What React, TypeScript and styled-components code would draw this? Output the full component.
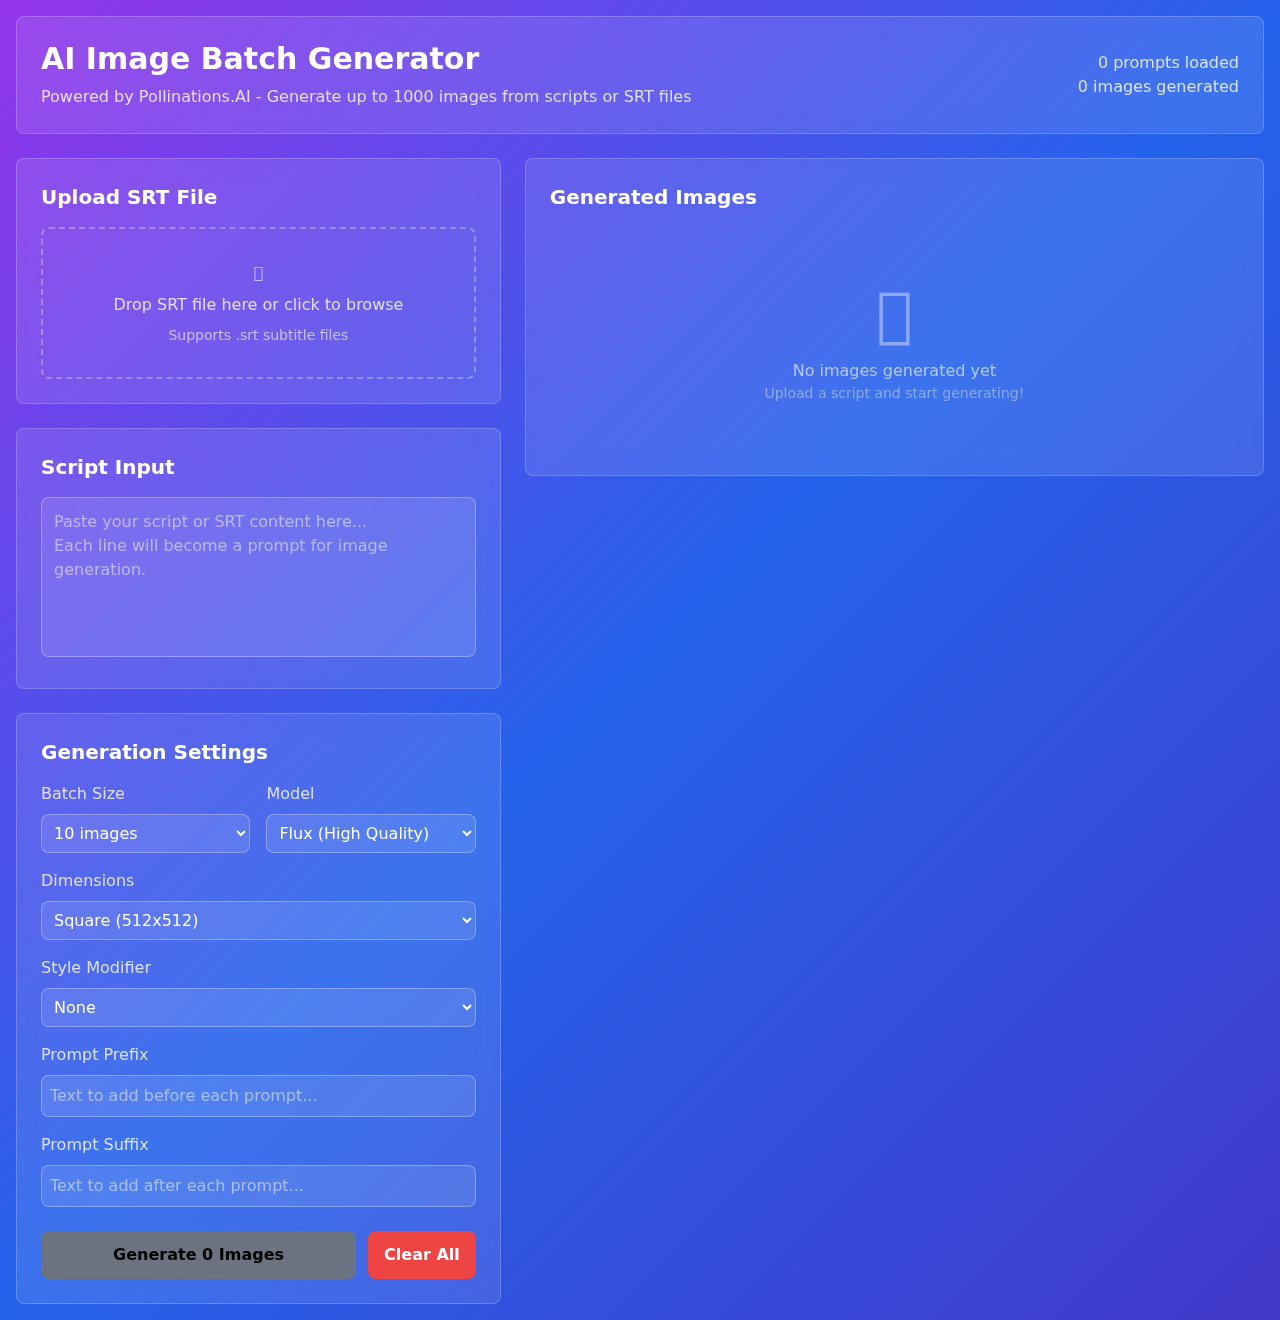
import { FC } from 'react';
import styled, { createGlobalStyle } from 'styled-components';

const GlobalStyle = createGlobalStyle`
  * {
    box-sizing: border-box;
  }

  body {
    margin: 0;
    font-family: 'DejaVu Sans', sans-serif;
    font-size: 16px;
    line-height: 24px;
    color: #fff;
  }
`;

const App: FC = () => (
  <Page>
    <GlobalStyle />
    <Header>
      <div>
        <Title>AI Image Batch Generator</Title>
        <Subtitle>Powered by Pollinations.AI - Generate up to 1000 images from scripts or SRT files</Subtitle>
      </div>
      <Stats>
        <div>0 prompts loaded</div>
        <div>0 images generated</div>
      </Stats>
    </Header>

    <Columns>
      <LeftColumn>
        <Panel>
          <PanelTitle>Upload SRT File</PanelTitle>
          <DropZone>
            <DropIcon>{'\uE000'}</DropIcon>
            <DropText>Drop SRT file here or click to browse</DropText>
            <DropHint>Supports .srt subtitle files</DropHint>
          </DropZone>
        </Panel>

        <Panel>
          <PanelTitle>Script Input</PanelTitle>
          <ScriptArea placeholder={'Paste your script or SRT content here...\nEach line will become a prompt for image generation.'} />
        </Panel>

        <Panel>
          <PanelTitle>Generation Settings</PanelTitle>
          <Fields>
            <FieldRow>
              <Field>
                <Label>Batch Size</Label>
                <Select defaultValue="10">
                  <option value="10">10 images</option>
                  <option value="50">50 images</option>
                </Select>
              </Field>
              <Field>
                <Label>Model</Label>
                <Select defaultValue="flux">
                  <option value="flux">Flux (High Quality)</option>
                  <option value="turbo">Turbo (Fast)</option>
                </Select>
              </Field>
            </FieldRow>
            <Field>
              <Label>Dimensions</Label>
              <Select defaultValue="square">
                <option value="square">Square (512x512)</option>
                <option value="wide">Wide (768x512)</option>
              </Select>
            </Field>
            <Field>
              <Label>Style Modifier</Label>
              <Select defaultValue="none">
                <option value="none">None</option>
                <option value="photo">Photorealistic</option>
              </Select>
            </Field>
            <Field>
              <Label>Prompt Prefix</Label>
              <TextInput placeholder="Text to add before each prompt..." />
            </Field>
            <Field>
              <Label>Prompt Suffix</Label>
              <TextInput placeholder="Text to add after each prompt..." />
            </Field>
          </Fields>
          <Actions>
            <GenerateButton>Generate 0 Images</GenerateButton>
            <ClearButton>Clear All</ClearButton>
          </Actions>
        </Panel>
      </LeftColumn>

      <RightColumn>
        <Panel>
          <PanelTitle>Generated Images</PanelTitle>
          <EmptyState>
            <EmptyIcon>{'\uE000'}</EmptyIcon>
            <EmptyText>No images generated yet</EmptyText>
            <EmptyHint>Upload a script and start generating!</EmptyHint>
          </EmptyState>
        </Panel>
      </RightColumn>
    </Columns>
  </Page>
);

export default App;

const Page = styled.div`
  min-height: 1320px;
  padding: 16px;
  background: linear-gradient(135deg, #9333ea 0%, #2563eb 50%, #4338ca 100%);
`;

const Panel = styled.section`
  padding: 24px;
  background-color: rgba(255, 255, 255, 0.1);
  border: 1px solid rgba(255, 255, 255, 0.2);
  border-radius: 8px;
  backdrop-filter: blur(10px);
`;

const Header = styled(Panel).attrs({ as: 'header' })`
  display: flex;
  justify-content: space-between;
  align-items: center;
  margin-bottom: 24px;
`;

const Title = styled.h1`
  margin: 0 0 8px;
  font-size: 30px;
  line-height: 36px;
  font-weight: 700;
`;

const Subtitle = styled.p`
  margin: 0;
  color: rgba(255, 255, 255, 0.8);
`;

const Stats = styled.div`
  text-align: right;
  color: rgba(255, 255, 255, 0.8);
`;

const Columns = styled.div`
  display: grid;
  grid-template-columns: repeat(5, 1fr);
  gap: 24px;
  align-items: start;
`;

const LeftColumn = styled.div`
  grid-column: span 2;
  display: flex;
  flex-direction: column;
  gap: 24px;
`;

const RightColumn = styled.div`
  grid-column: span 3;
`;

const PanelTitle = styled.h2`
  margin: 0 0 16px;
  font-size: 20px;
  line-height: 28px;
  font-weight: 600;
`;

const DropZone = styled.div`
  padding: 32px;
  border: 2px dashed rgba(255, 255, 255, 0.3);
  border-radius: 8px;
  text-align: center;
`;

const DropIcon = styled.div`
  margin-bottom: 8px;
  color: rgba(255, 255, 255, 0.6);
`;

const DropText = styled.p`
  margin: 0 0 8px;
  color: rgba(255, 255, 255, 0.8);
`;

const DropHint = styled.p`
  margin: 0;
  font-size: 14px;
  line-height: 20px;
  color: rgba(255, 255, 255, 0.6);
`;

const ScriptArea = styled.textarea`
  width: 100%;
  height: 160px;
  padding: 12px;
  font-family: inherit;
  font-size: 16px;
  line-height: 24px;
  color: #fff;
  background-color: rgba(255, 255, 255, 0.1);
  border: 1px solid rgba(255, 255, 255, 0.3);
  border-radius: 8px;
  resize: none;
  outline: none;

  &::placeholder {
    color: rgba(255, 255, 255, 0.5);
  }
`;

const Fields = styled.div`
  display: flex;
  flex-direction: column;
  gap: 16px;
`;

const FieldRow = styled.div`
  display: grid;
  grid-template-columns: 1fr 1fr;
  gap: 16px;
`;

const Field = styled.div`
  min-width: 0;
`;

const Label = styled.label`
  display: block;
  margin-bottom: 8px;
  color: rgba(255, 255, 255, 0.8);
`;

const Select = styled.select`
  display: block;
  width: 100%;
  height: 39px;
  padding: 8px;
  font-family: inherit;
  font-size: 16px;
  color: #fff;
  background-color: rgba(255, 255, 255, 0.1);
  border: 1px solid rgba(255, 255, 255, 0.3);
  border-radius: 8px;
  outline: none;

  > option {
    color: #000;
  }
`;

const TextInput = styled.input`
  display: block;
  width: 100%;
  padding: 8px;
  font-family: inherit;
  font-size: 16px;
  line-height: 24px;
  color: #fff;
  background-color: rgba(255, 255, 255, 0.1);
  border: 1px solid rgba(255, 255, 255, 0.3);
  border-radius: 8px;
  outline: none;

  &::placeholder {
    color: rgba(255, 255, 255, 0.5);
  }
`;

const Actions = styled.div`
  display: flex;
  gap: 12px;
  margin-top: 24px;
`;

const ActionButton = styled.button`
  height: 48px;
  padding: 12px 16px;
  font-family: inherit;
  font-size: 16px;
  line-height: 24px;
  font-weight: 600;
  border: none;
  border-radius: 8px;
`;

const GenerateButton = styled(ActionButton)`
  flex: 1;
  color: #000;
  background-color: #6b7280;
`;

const ClearButton = styled(ActionButton)`
  color: #fff;
  background-color: #ef4444;
`;

const EmptyState = styled.div`
  padding: 48px 0;
  text-align: center;
`;

const EmptyIcon = styled.div`
  padding-top: 9px;
  margin-bottom: 15px;
  font-size: 60px;
  line-height: 60px;
  color: rgba(255, 255, 255, 0.4);
`;

const EmptyText = styled.p`
  margin: 0;
  color: rgba(255, 255, 255, 0.6);
`;

const EmptyHint = styled.p`
  margin: 0;
  font-size: 14px;
  line-height: 20px;
  color: rgba(255, 255, 255, 0.4);
`;
